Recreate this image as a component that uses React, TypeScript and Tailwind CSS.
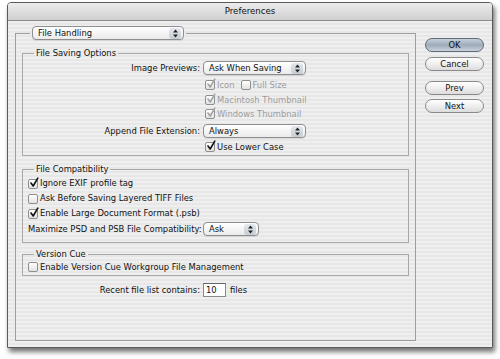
import React from "react"

const font = { fontFamily: '"DejaVu Sans", Verdana, sans-serif' }

function Arrows() {
  return (
    <svg width="7" height="9" viewBox="0 0 7 9" className="shrink-0">
      <path d="M3.5 0.5 L6 3.5 L1 3.5 Z" fill="#222" />
      <path d="M3.5 8.5 L6 5.5 L1 5.5 Z" fill="#222" />
    </svg>
  )
}

function Popup({ label, w }: { label: string; w: string }) {
  return (
    <div
      className={`${w} h-[14px] rounded-[4px] border border-[#8e8e8e] bg-gradient-to-b from-white to-[#ebebeb] flex items-center pl-[5px] pr-[2px] shadow-[0_1px_0_rgba(0,0,0,0.08)]`}
    >
      <span className="flex-1 leading-none whitespace-nowrap">{label}</span>
      <span className="h-[11px] w-[12px] rounded-[3px] bg-gradient-to-b from-[#e4e8ee] to-[#c7ccd4] flex items-center justify-center">
        <Arrows />
      </span>
    </div>
  )
}

function Check({ checked, disabled }: { checked?: boolean; disabled?: boolean }) {
  return (
    <span className="relative w-[10px] h-[10px] shrink-0 rounded-[2px] border border-[#8f8f8f] bg-gradient-to-b from-white to-[#e2e2e2]">
      {checked && (
        <svg width="10" height="11" viewBox="0 0 10 11" className="absolute left-[0px] top-[-3px]">
          <path
            d="M2 6 L4.2 9 L8.8 1.2"
            fill="none"
            stroke={disabled ? "#a2a2a2" : "#111"}
            strokeWidth="1.6"
            strokeLinecap="round"
            strokeLinejoin="round"
          />
        </svg>
      )}
    </span>
  )
}

function CheckRow({
  label,
  checked,
  disabled,
  h = "h-[14px]",
}: {
  label: string
  checked?: boolean
  disabled?: boolean
  h?: string
}) {
  return (
    <div className={`flex items-center gap-[2px] ${h} ${disabled ? "text-[#9c9c9c]" : ""}`}>
      <Check checked={checked} disabled={disabled} />
      <span className="leading-none whitespace-nowrap">{label}</span>
    </div>
  )
}

function Button({ label, main }: { label: string; main?: boolean }) {
  return (
    <div
      className={`w-[59px] h-[14px] rounded-full border flex items-center justify-center leading-none ${
        main
          ? "border-[#5f6a78] bg-gradient-to-b from-[#c6d0dc] via-[#9eabba] to-[#c9d2dd]"
          : "border-[#8a8a8a] bg-gradient-to-b from-white via-[#efefef] to-[#dcdcdc]"
      }`}
    >
      {label}
    </div>
  )
}

export default function App() {
  return (
    <div className="w-[500px] h-[359px] bg-white overflow-hidden text-[8.4px] text-[#111]" style={font}>
      <div className="ml-[7px] mt-[2px] w-[486px] h-[346px] border border-[#5a5a5a] rounded-t-[4px] flex flex-col shadow-[2px_4px_5px_rgba(0,0,0,0.55)] overflow-hidden">
        {/* title bar */}
        <div className="h-[18px] shrink-0 border-b border-[#8c8c8c] bg-gradient-to-b from-[#ececec] to-[#cfcfcf] flex items-center justify-center text-[8.6px]">
          Preferences
        </div>

        <div className="flex-1 flex pl-[7px] pt-[5px] bg-[repeating-linear-gradient(180deg,#efefef_0px,#efefef_2px,#e7e7e7_2px,#e7e7e7_4px)]">
          <fieldset className="w-[401px] h-[315px] border border-[#9e9e9e] px-[6px]">
            <legend className="ml-[8px] px-[2px]">
              <Popup label="File Handling" w="w-[152px]" />
            </legend>

            {/* File Saving Options */}
            <fieldset className="mt-[8px] border border-[#a8a8a8] pb-[1px]">
              <legend className="ml-[11px] px-[2px] leading-[11px]">File Saving Options</legend>
              <div className="flex items-center mt-[2px] h-[14px]">
                <span className="w-[177px] text-right leading-none">Image Previews:</span>
                <div className="ml-[3px]">
                  <Popup label="Ask When Saving" w="w-[103px]" />
                </div>
              </div>
              <div className="pl-[182px] mt-[3px] flex flex-col">
                <div className="flex items-center gap-[6px]">
                  <CheckRow label="Icon" checked disabled />
                  <CheckRow label="Full Size" disabled />
                </div>
                <div className="mt-[1px]">
                  <CheckRow label="Macintosh Thumbnail" checked disabled />
                </div>
                <CheckRow label="Windows Thumbnail" checked disabled />
              </div>
              <div className="flex items-center mt-[3px] h-[14px]">
                <span className="w-[177px] text-right leading-none">Append File Extension:</span>
                <div className="ml-[3px]">
                  <Popup label="Always" w="w-[103px]" />
                </div>
              </div>
              <div className="pl-[182px] mt-[2px]">
                <CheckRow label="Use Lower Case" checked />
              </div>
            </fieldset>

            {/* File Compatibility */}
            <fieldset className="mt-[8px] border border-[#a8a8a8] pl-[5px] pb-[6px]">
              <legend className="ml-[6px] px-[2px] leading-[11px]">File Compatibility</legend>
              <div className="flex flex-col mt-[1px]">
                <CheckRow label="Ignore EXIF profile tag" checked h="h-[15px]" />
                <CheckRow label="Ask Before Saving Layered TIFF Files" h="h-[15px]" />
                <CheckRow label="Enable Large Document Format (.psb)" checked h="h-[15px]" />
              </div>
              <div className="flex items-center mt-[1px] h-[14px]">
                <span className="w-[175px] leading-none whitespace-nowrap">
                  Maximize PSD and PSB File Compatibility:
                </span>
                <Popup label="Ask" w="w-[56px]" />
              </div>
            </fieldset>

            {/* Version Cue */}
            <fieldset className="mt-[6px] border border-[#a8a8a8] pl-[5px] pb-[1px]">
              <legend className="ml-[6px] px-[2px] leading-[11px]">Version Cue</legend>
              <div className="mt-[0px]">
                <CheckRow label="Enable Version Cue Workgroup File Management" />
              </div>
            </fieldset>

            <div className="flex items-center mt-[7px] h-[14px]">
              <span className="w-[178px] text-right leading-none">Recent file list contains:</span>
              <div className="ml-[3px] w-[23px] h-[14px] border border-[#8a8a8a] border-t-[#666] bg-white flex items-center pl-[2px] leading-none">
                10
              </div>
              <span className="ml-[4px] leading-none">files</span>
            </div>
          </fieldset>

          {/* buttons */}
          <div className="ml-[9px] mt-[12px] flex flex-col">
            <Button label="OK" main />
            <div className="mt-[5px]">
              <Button label="Cancel" />
            </div>
            <div className="mt-[10px]">
              <Button label="Prev" />
            </div>
            <div className="mt-[4px]">
              <Button label="Next" />
            </div>
          </div>
        </div>
      </div>
    </div>
  )
}
